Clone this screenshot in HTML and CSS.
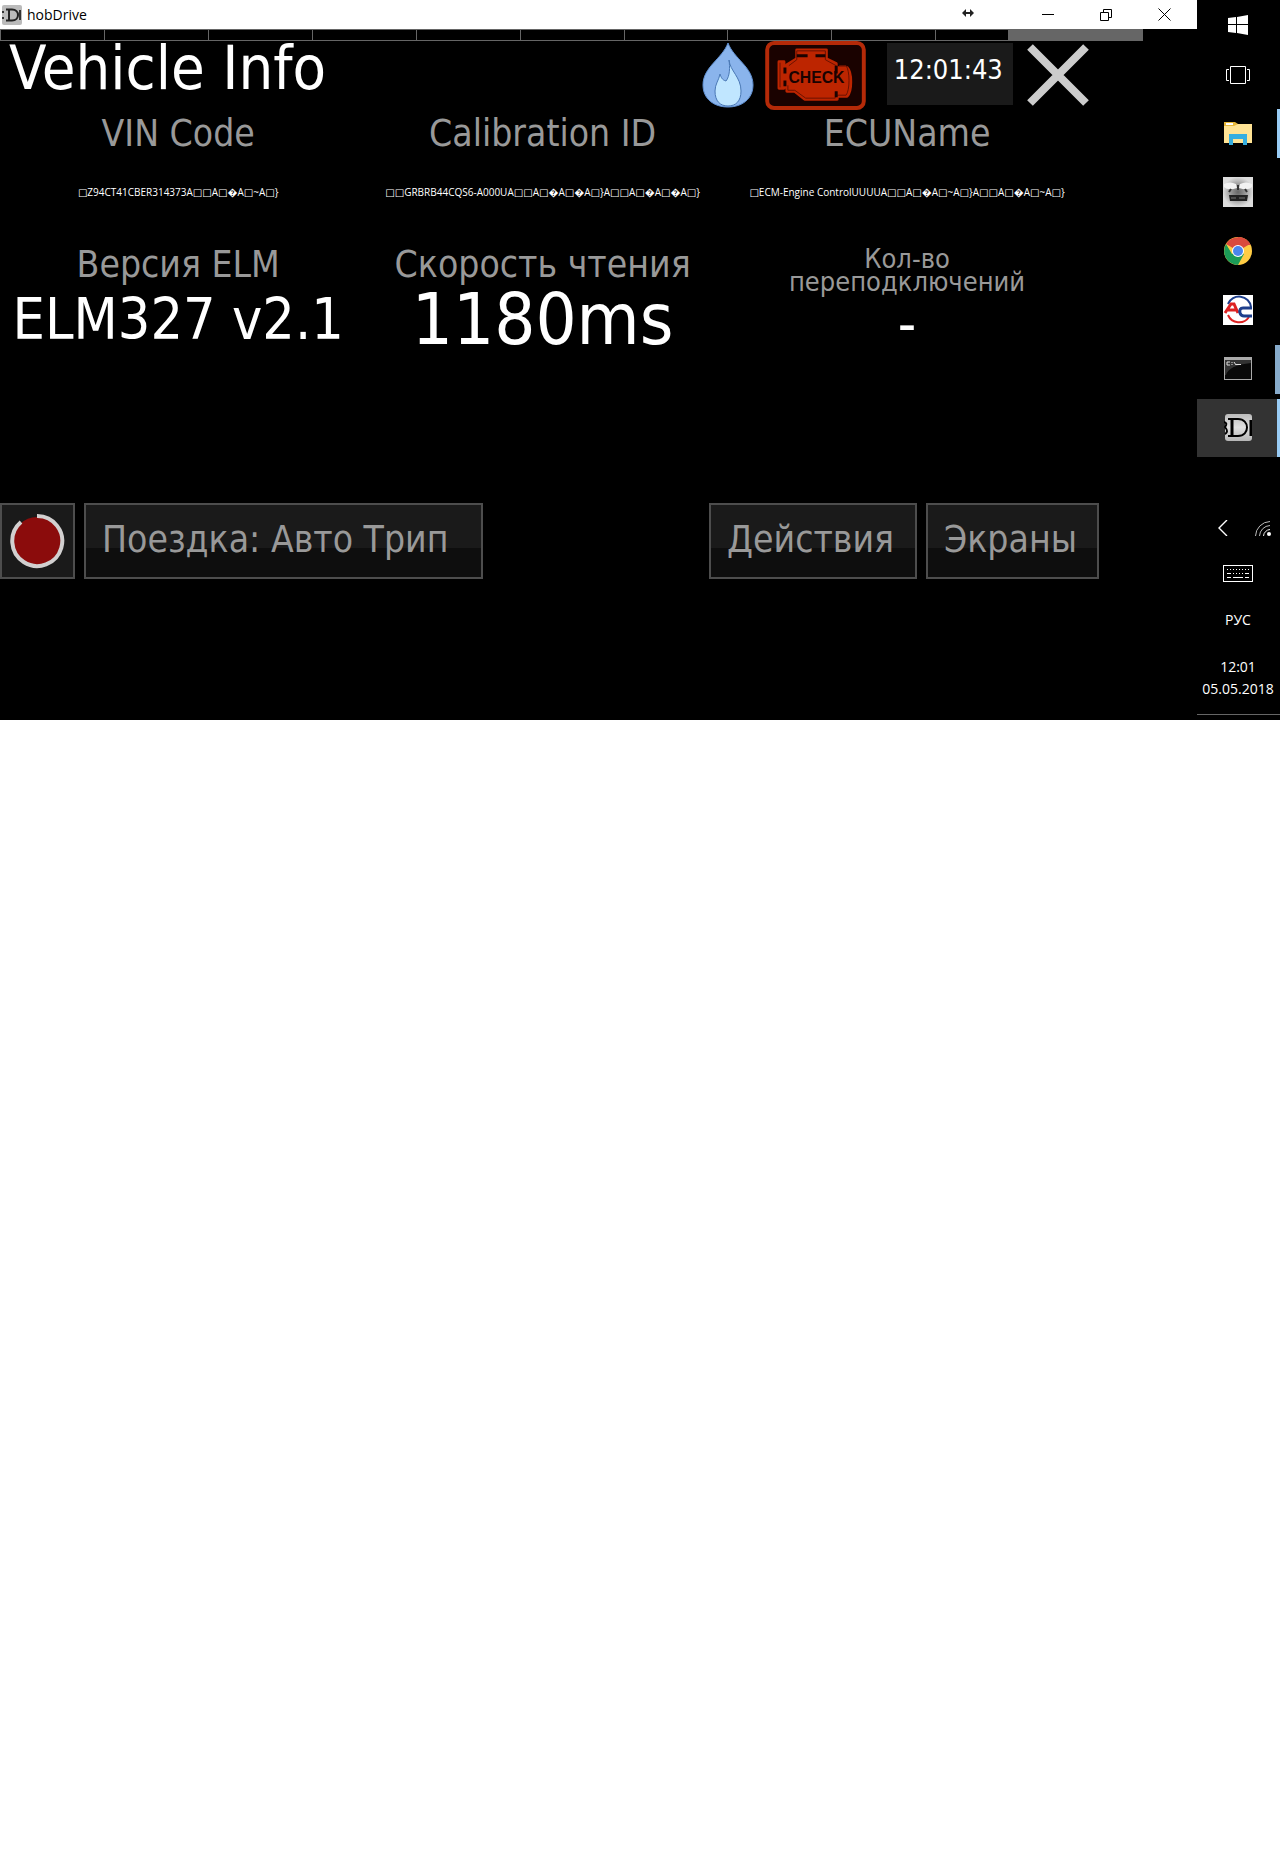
FILE: index.html
```html
<!DOCTYPE html>
<html lang="ru">
<head>
    <meta charset="UTF-8">
    <meta name="viewport" content="width=device-width, initial-scale=1.0">
    <title>hobDrive</title>
    <link rel="stylesheet" href="styles.css">
</head>
<body>
    <div class="desktop">
        <main class="window">
            <div class="titlebar">
                <svg class="app-icon" width="20" height="20" viewBox="0 0 20 20">
                    <defs>
                        <linearGradient id="metal" x1="0" y1="0" x2="0" y2="1">
                            <stop offset="0" stop-color="#bbb"/>
                            <stop offset="0.5" stop-color="#e0e0e0"/>
                            <stop offset="1" stop-color="#b5b5b5"/>
                        </linearGradient>
                    </defs>
                    <rect width="20" height="20" rx="2" fill="#bbb"/>
                    <path d="M4 4.500h6c8 0 8 11 0 11H4M7 4v11" fill="none" stroke="#222" stroke-width="2"/>
                    <path d="M18 5v10M0 7h2M0 13h2" stroke="#333" stroke-width="2"/>
                </svg>
                <span class="titlebar-text">hobDrive</span>
                <div class="window-controls">
                    <button class="win-btn win-resize" aria-label="Resize">
                        <svg width="12" height="8" viewBox="0 0 12 8"><path d="M0 4l4-4v3h4V0l4 4-4 4V5H4v3z" fill="#222"/></svg>
                    </button>
                    <button class="win-btn" aria-label="Minimize">
                        <svg width="12" height="12" viewBox="0 0 12 12"><path d="M0 5.500h12" stroke="#000"/></svg>
                    </button>
                    <button class="win-btn" aria-label="Restore">
                        <svg width="12" height="12" viewBox="0 0 12 12"><path d="M0.500 3.500h8v8h-8zM3.500 3V0.500h8v8H9" fill="none" stroke="#000"/></svg>
                    </button>
                    <button class="win-btn" aria-label="Close">
                        <svg width="13" height="13" viewBox="0 0 13 13"><path d="M0.500 0.500l12 12M12.500 0.500l-12 12" stroke="#000"/></svg>
                    </button>
                </div>
            </div>

            <div class="progress">
                <span></span><span></span><span></span><span></span><span></span><span></span>
                <span></span><span></span><span></span><span class="partial"></span><span class="full"></span>
            </div>

            <header class="header">
                <h1>Vehicle Info</h1>
                <svg class="gas" width="52" height="66" viewBox="0 0 52 66">
                    <path d="M26 1C20 17 1 25 1 43c0 14 11 22 25 22s25-8 25-22C51 25 32 17 26 1z" fill="#8ab4ec" stroke="#5f8fd0"/>
                    <path d="M27 18c1 11 12 17 12 31 0 10-5 15-13 15s-13-5-13-15c0-7 4-11 5-17 1 3 2 6 6 7 4-5 4-14 3-21z" fill="#c0e6ff" stroke="#4a78b5"/>
                </svg>
                <svg class="check" width="101" height="69" viewBox="0 0 102 70">
                    <rect x="2" y="2" width="98" height="66" rx="7" fill="#1a0200" stroke="#b52a08" stroke-width="4"/>
                    <path d="M32 9h30v9l10 5v4h11c5 5 5 24 0 29H73v3H40l-10-8h-8V42h-3v6h-5V21h5v6h3v-3l10-6z" fill="#bd2500" stroke="#bd2500" stroke-width="3" stroke-linejoin="round"/>
                    <path d="M32 10h29v9l11 6v5M75 25h7c4 5 4 25 0 30h-9M71 57v1H41l-11-8h-7v-5M15 22v25M32 10v9l-8 6" fill="none" stroke="#6b1200"/>
                    <path d="M32 15h11M51 15h10M20 27v6M20 40v6M72 25v8M72 51v6" stroke="#1a0200" stroke-width="3"/>
                    <text x="52" y="43" text-anchor="middle" class="check-text">CHECK</text>
                </svg>
                <time class="clock">12:01:43</time>
                <button class="close" aria-label="Закрыть">
                    <svg width="62" height="62" viewBox="0 0 62 62"><path d="M3 3l56 56M59 3L3 59" stroke="#ccc" stroke-width="8"/></svg>
                </button>
            </header>

            <section class="sensors">
                <div class="sensor">
                    <h2>VIN Code</h2>
                    <p class="raw">□Z94CT41CBER314373A□□A□�A□~A□}</p>
                </div>
                <div class="sensor">
                    <h2>Calibration ID</h2>
                    <p class="raw">□□GRBRB44CQS6-A000UA□□A□�A□�A□}A□□A□�A□�A□}</p>
                </div>
                <div class="sensor">
                    <h2>ECUName</h2>
                    <p class="raw">□ECM-Engine ControlUUUUA□□A□�A□~A□}A□□A□�A□~A□}</p>
                </div>
                <div class="sensor">
                    <h2>Версия ELM</h2>
                    <p class="value">ELM327 v2.1</p>
                </div>
                <div class="sensor">
                    <h2>Скорость чтения</h2>
                    <p class="value big">1180ms</p>
                </div>
                <div class="sensor">
                    <h2 class="small">Кол-во<br>переподключений</h2>
                    <p class="value">-</p>
                </div>
            </section>

            <footer class="actions">
                <button class="action record" aria-label="Запись">
                    <svg width="56" height="56" viewBox="0 0 56 56">
                        <circle cx="28" cy="28" r="24" fill="#8b0c0c"/>
                        <path d="M28 3a25 25 0 1 1-16 6" fill="none" stroke="#d2d0d0" stroke-width="4"/>
                    </svg>
                </button>
                <button class="action trip">Поездка: Авто Трип</button>
                <button class="action menu">Действия</button>
                <button class="action screens">Экраны</button>
            </footer>
        </main>

        <aside class="taskbar">
            <button class="task start" aria-label="Пуск">
                <svg width="20" height="20" viewBox="0 0 20 20"><path d="M0 3l8-1v7H0zM9 2l11-2v9H9zM0 10h8v8l-8-1zM9 10h11v10L9 18z" fill="#fff"/></svg>
            </button>
            <button class="task view" aria-label="Представление задач">
                <svg width="24" height="18" viewBox="0 0 24 18"><path d="M4.500 0.500h15v17h-15zM3 3.500H0.500v11H3M21 3.500h2.500v11H21" fill="none" stroke="#fff"/></svg>
            </button>
            <button class="task open" aria-label="Проводник">
                <svg width="28" height="24" viewBox="0 0 28 24">
                    <path d="M0 1h11l3 2h14v19H0z" fill="#e8b83a"/>
                    <path d="M2 2h7v2H2z" fill="#fff"/>
                    <path d="M0 5h10l4-2h14v19H0z" fill="#ffe394"/>
                    <path d="M5 24V13h18v11h-4v-6H9v6z" fill="#35aee0"/>
                </svg>
            </button>
            <button class="task" aria-label="iCar">
                <svg width="30" height="30" viewBox="0 0 30 30">
                    <defs>
                        <radialGradient id="fog">
                            <stop offset="0" stop-color="#666"/>
                            <stop offset="0.500" stop-color="#999"/>
                            <stop offset="1" stop-color="#ddd"/>
                        </radialGradient>
                    </defs>
                    <rect width="30" height="30" fill="url(#fog)"/>
                    <path d="M1 7q6-3 12 0l1 4q-9 3-13-1zM29 7q-6-3-12 0l-1 4q9 3 13-1z" fill="#f2f2f2"/>
                    <path d="M15 8v5M6 15l2-3M24 15l-2-3" stroke="#333" stroke-width="2"/>
                    <path d="M6 18h19l-1 6H7z" fill="#222"/>
                    <path d="M8 21h5M16 21h6" stroke="#777"/>
                </svg>
            </button>
            <button class="task" aria-label="Chrome">
                <svg width="28" height="28" viewBox="0 0 28 28">
                    <circle cx="14" cy="14" r="14" fill="#fc4"/>
                    <path d="M14 14L2 7a14 14 0 0 1 24 0z" fill="#d94a3d"/>
                    <path d="M14 8h12.600A14 14 0 0 0 14 0z" fill="#d94a3d"/>
                    <path d="M2 7a14 14 0 0 0 12 21l6-11-6-3-6 3z" fill="#1b9b57"/>
                    <circle cx="14" cy="14" r="6" fill="#fff"/>
                    <circle cx="14" cy="14" r="5" fill="#4a86ee"/>
                </svg>
            </button>
            <button class="task" aria-label="AC">
                <svg width="30" height="30" viewBox="0 0 30 30">
                    <rect width="30" height="30" fill="#fff"/>
                    <path d="M5 9a12 12 0 0 1 23 3" fill="none" stroke="#1d3e8c" stroke-width="2"/>
                    <path d="M5 20a12 12 0 0 0 21 2" fill="none" stroke="#d22" stroke-width="2"/>
                    <path d="M2 18l6-9h3l4 9M5 15h9" fill="none" stroke="#d22" stroke-width="3"/>
                    <path d="M29 13h-9q-4 0-3 5 1 3 4 3h8" fill="none" stroke="#1d3e8c" stroke-width="3"/>
                </svg>
            </button>
            <button class="task open multi" aria-label="Командная строка">
                <svg width="28" height="23" viewBox="0 0 28 23">
                    <rect x="0.500" y="0.500" width="27" height="22" fill="#0a0a0a" stroke="#aaa"/>
                    <path d="M1 3V1h26v2z" fill="#aaa"/>
                    <path d="M1 3h26v3Q5 8 2 18H1z" fill="#333"/>
                    <path d="M3 5h3M3 8h3M3 5v3M8 5v1M8 7v1M10 5l2 3M12 7.500h5" fill="none" stroke="#ddd"/>
                </svg>
            </button>
            <button class="task open active" aria-label="hobDrive">
                <svg width="28" height="28" viewBox="0 0 28 28">
                    <rect x="1" width="27" height="27" rx="3" fill="url(#metal)"/>
                    <path d="M4 5h10c12 0 12 17 0 17H4" fill="none" stroke="#000" stroke-width="2"/>
                    <path d="M8 5v17M27 6v16" stroke="#000" stroke-width="3"/>
                    <path d="M0 8q4 1 1 5 4 5 0 7" fill="none" stroke="#000" stroke-width="2"/>
                </svg>
            </button>

            <div class="tray">
                <div class="tray-row">
                    <button class="tray-btn" aria-label="Скрытые значки">
                        <svg width="10" height="16" viewBox="0 0 10 16"><path d="M9 0L1 8l8 8" fill="none" stroke="#fff" stroke-width="1.400"/></svg>
                    </button>
                    <button class="tray-btn" aria-label="Сеть">
                        <svg width="16" height="16" viewBox="0 0 16 16">
                            <path d="M0.500 16A15 15 0 0 1 15 1.500M4.500 16A11 11 0 0 1 15 5.500" fill="none" stroke="#bbb"/>
                            <path d="M8.500 16A7 7 0 0 1 15 9.500" fill="none" stroke="#eee"/>
                            <circle cx="14" cy="14" r="2" fill="#fff"/>
                        </svg>
                    </button>
                </div>
                <button class="tray-btn keyboard" aria-label="Клавиатура">
                    <svg width="30" height="17" viewBox="0 0 30 17">
                        <rect x="0.500" y="0.500" width="29" height="16" fill="none" stroke="#fff"/>
                        <path d="M4 4.500h22M10 8.500h11" stroke="#fff" stroke-dasharray="1 2"/>
                        <path d="M4 8.500h4M22 8.500h4M4 12.500h4M10 12.500h10M22 12.500h4" stroke="#fff"/>
                    </svg>
                </button>
                <button class="tray-btn lang">РУС</button>
                <time class="tray-clock">12:01<br>05.05.2018</time>
            </div>
        </aside>
    </div>
</body>
</html>
```
FILE: styles.css
```css
* {
    margin: 0;
    padding: 0;
    box-sizing: border-box;
}

body {
    font-family: Tahoma, 'DejaVu Sans Condensed', 'DejaVu Sans', sans-serif;
    background: #fff;
}

button {
    border: none;
    background: none;
    color: inherit;
    font-family: inherit;
    cursor: pointer;
}

svg {
    display: block;
    flex: none;
}

.desktop {
    display: flex;
    background: #000;
    color: #fff;
    min-height: 720px;
}

.window {
    flex: 1;
    min-width: 0;
}

/* title bar */
.titlebar {
    display: flex;
    align-items: center;
    height: 29px;
    padding: 0 4px 0 2px;
    background: #fff;
    color: #000;
    font-family: 'Segoe UI', 'Open Sans', sans-serif;
    font-size: 14px;
}

.titlebar-text {
    margin-left: 5px;
}

.window-controls {
    display: flex;
    margin-left: auto;
}

.win-btn {
    display: flex;
    align-items: center;
    justify-content: center;
    width: 58px;
    height: 29px;
}

.win-resize {
    width: 102px;
    padding-bottom: 4px;
}

/* segmented strip */
.progress {
    display: flex;
    width: 95.5%;
    height: 12px;
    border: 1px solid #666;
    border-width: 1px 0 1px 1px;
}

.progress span {
    flex: 1;
    border-right: 1px solid #666;
}

.progress .partial {
    border-right: none;
    background: linear-gradient(to right, #000 70%, #666 70%);
}

.progress .full {
    background: #666;
}

.header {
    display: flex;
    align-items: flex-start;
    height: 69px;
    padding-right: 9%;
}

.header h1 {
    margin: 0 auto 0 9px;
    font-size: 61px;
    font-weight: normal;
    line-height: 54px;
    white-space: nowrap;
}

.gas {
    margin: 1px 11px 0 0;
}

.check {
    margin-right: 21px;
}

.check-text {
    font-family: 'Liberation Sans', Arial, sans-serif;
    font-size: 16px;
    font-weight: bold;
    fill: #1a0200;
}

.clock {
    width: 126px;
    height: 62px;
    margin: 2px 14px 0 0;
    padding-right: 4px;
    background: #1a1a1a;
    font-size: 27px;
    line-height: 54px;
    text-align: center;
}

.close {
    margin-top: 3px;
}

/* sensors grid */
.sensors {
    display: grid;
    grid-template-columns: repeat(3, 1fr);
    grid-template-rows: 131px 262px;
    margin-left: -4px;
    padding-right: 9%;
}

.sensor {
    min-width: 0;
    text-align: center;
    white-space: nowrap;
}

.sensor h2 {
    color: #999;
    font-size: 37px;
    font-weight: normal;
    line-height: 48px;
}

.sensor h2.small {
    padding-top: 6px;
    font-size: 27px;
    line-height: 23px;
}

.raw {
    font-family: 'Open Sans', 'DejaVu Sans', sans-serif;
    font-size: 10px;
    line-height: 68px;
}

.value {
    font-size: 57px;
    line-height: 60px;
}

.value.big {
    font-size: 72px;
}

/* bottom buttons */
.actions {
    display: flex;
    gap: 9px;
    padding-right: 98px;
}

.action {
    height: 76px;
    padding: 0 16px 3px;
    border: 2px solid #4d4d4d;
    background: linear-gradient(to bottom, #1a1a1a 60%, #0e0e0e 60%);
    color: #999;
    font-size: 37px;
    text-align: left;
    white-space: nowrap;
}

.record {
    width: 75px;
    padding: 0 7px;
    background: #1a1a1a;
}

.trip {
    width: 399px;
    margin-right: auto;
}

.menu {
    width: 208px;
}

.screens {
    width: 173px;
}

/* taskbar */
.taskbar {
    display: flex;
    flex-direction: column;
    width: 83px;
    border-bottom: 1px solid #666;
    margin-bottom: 5px;
    font-family: 'Segoe UI', 'Open Sans', sans-serif;
}

.task {
    display: flex;
    align-items: center;
    justify-content: center;
    height: 59px;
    padding: 0 2px 2px 0;
}

.task.start,
.task.view {
    height: 50px;
    padding-bottom: 0;
}

.task.view {
    margin-bottom: 4px;
}

.task.open {
    height: 49px;
    margin: 5px 0;
    padding-left: 1px;
    padding-right: 0;
    border-right: 3px solid #99ccf5;
}

.task.multi {
    padding-left: 3px;
    border-right: 5px solid #86aaca;
}

.task.active {
    height: 58px;
    margin: 0;
    padding-bottom: 0;
    background: #333;
}

.tray {
    display: flex;
    flex-direction: column;
    align-items: center;
    margin-top: auto;
    padding-right: 1px;
    font-size: 14px;
}

.tray-row {
    display: flex;
    align-items: center;
    gap: 27px;
    align-self: flex-end;
    padding-right: 8px;
}

.keyboard {
    margin-top: 29px;
}

.lang {
    margin-top: 28px;
    font-size: 14px;
    line-height: 20px;
}

.tray-clock {
    margin: 26px 0 14px;
    line-height: 22px;
    text-align: center;
}
```
